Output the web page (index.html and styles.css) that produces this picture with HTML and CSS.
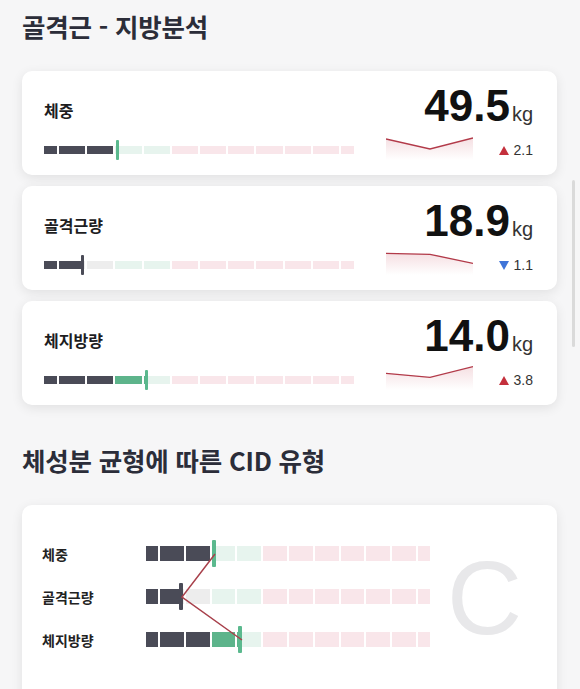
FILE: index.html
```html
<!DOCTYPE html>
<html lang="ko">
<head>
<meta charset="utf-8">
<title>골격근 - 지방분석</title>
<link rel="stylesheet" href="styles.css">
</head>
<body>
<div class="page">
  <h2 class="section-title first">골격근 - 지방분석</h2>

  <div class="card metric">
    <div class="metric-top">
      <span class="metric-label">체중</span>
      <span class="metric-value"><span class="num">49.5</span><span class="unit">kg</span></span>
    </div>
    <div class="metric-bottom">
      <div class="bar">
        <span class="s half d"></span><span class="s d"></span><span class="s d"></span><span class="s n"></span><span class="s n"></span><span class="s o"></span><span class="s o"></span><span class="s o"></span><span class="s o"></span><span class="s o"></span><span class="s o"></span><span class="s half o"></span>
        <i class="marker green" style="left:72px"></i>
      </div>
      <svg class="spark" width="87" height="26" viewBox="0 0 87 26">
        <defs><linearGradient id="sg1" x1="0" y1="0" x2="0" y2="1"><stop offset="0" stop-color="#c0394b" stop-opacity="0.16"/><stop offset="1" stop-color="#c0394b" stop-opacity="0"/></linearGradient></defs>
        <path d="M0,5 L44,15 L87,4 L87,26 L0,26 Z" fill="url(#sg1)"/>
        <path d="M0,5 L44,15 L87,4" fill="none" stroke="#b23a49" stroke-width="1.3"/>
      </svg>
      <span class="delta"><i class="tri up"></i>2.1</span>
    </div>
  </div>

  <div class="card metric">
    <div class="metric-top">
      <span class="metric-label">골격근량</span>
      <span class="metric-value"><span class="num">18.9</span><span class="unit">kg</span></span>
    </div>
    <div class="metric-bottom">
      <div class="bar">
        <span class="s half d"></span><span class="s" style="background:linear-gradient(90deg,#4a4b57 84%,#ededed 84%)"></span><span class="s u"></span><span class="s n"></span><span class="s n"></span><span class="s o"></span><span class="s o"></span><span class="s o"></span><span class="s o"></span><span class="s o"></span><span class="s o"></span><span class="s half o"></span>
        <i class="marker dark" style="left:37px"></i>
      </div>
      <svg class="spark" width="87" height="26" viewBox="0 0 87 26">
        <defs><linearGradient id="sg2" x1="0" y1="0" x2="0" y2="1"><stop offset="0" stop-color="#c0394b" stop-opacity="0.16"/><stop offset="1" stop-color="#c0394b" stop-opacity="0"/></linearGradient></defs>
        <path d="M0,4.3 L44,5.3 L87,14.3 L87,26 L0,26 Z" fill="url(#sg2)"/>
        <path d="M0,4.3 L44,5.3 L87,14.3" fill="none" stroke="#b23a49" stroke-width="1.3"/>
      </svg>
      <span class="delta"><i class="tri down"></i>1.1</span>
    </div>
  </div>

  <div class="card metric">
    <div class="metric-top">
      <span class="metric-label">체지방량</span>
      <span class="metric-value"><span class="num">14.0</span><span class="unit">kg</span></span>
    </div>
    <div class="metric-bottom">
      <div class="bar">
        <span class="s half d"></span><span class="s d"></span><span class="s d"></span><span class="s g"></span><span class="s" style="background:linear-gradient(90deg,#5db48b 7%,#e7f4ee 7%)"></span><span class="s o"></span><span class="s o"></span><span class="s o"></span><span class="s o"></span><span class="s o"></span><span class="s o"></span><span class="s half o"></span>
        <i class="marker green" style="left:101px"></i>
      </div>
      <svg class="spark" width="87" height="26" viewBox="0 0 87 26">
        <defs><linearGradient id="sg3" x1="0" y1="0" x2="0" y2="1"><stop offset="0" stop-color="#c0394b" stop-opacity="0.16"/><stop offset="1" stop-color="#c0394b" stop-opacity="0"/></linearGradient></defs>
        <path d="M0,9.3 L44,13.3 L87,2.7 L87,26 L0,26 Z" fill="url(#sg3)"/>
        <path d="M0,9.3 L44,13.3 L87,2.7" fill="none" stroke="#b23a49" stroke-width="1.3"/>
      </svg>
      <span class="delta"><i class="tri up"></i>3.8</span>
    </div>
  </div>

  <h2 class="section-title second">체성분 균형에 따른 CID 유형</h2>

  <div class="card cid">
    <div class="cid-chart">
      <div class="cid-row">
        <span class="cid-label">체중</span>
        <div class="bar bar-lg">
          <span class="s half d"></span><span class="s d"></span><span class="s d"></span><span class="s n"></span><span class="s n"></span><span class="s o"></span><span class="s o"></span><span class="s o"></span><span class="s o"></span><span class="s o"></span><span class="s o"></span><span class="s half o"></span>
          <i class="marker green" style="left:66px"></i>
        </div>
      </div>
      <div class="cid-row">
        <span class="cid-label">골격근량</span>
        <div class="bar bar-lg">
          <span class="s half d"></span><span class="s" style="background:linear-gradient(90deg,#4a4b57 88%,#ededed 88%)"></span><span class="s u"></span><span class="s n"></span><span class="s n"></span><span class="s o"></span><span class="s o"></span><span class="s o"></span><span class="s o"></span><span class="s o"></span><span class="s o"></span><span class="s half o"></span>
          <i class="marker dark" style="left:33px"></i>
        </div>
      </div>
      <div class="cid-row">
        <span class="cid-label">체지방량</span>
        <div class="bar bar-lg">
          <span class="s half d"></span><span class="s d"></span><span class="s d"></span><span class="s g"></span><span class="s" style="background:linear-gradient(90deg,#5db48b 4%,#e7f4ee 4%)"></span><span class="s o"></span><span class="s o"></span><span class="s o"></span><span class="s o"></span><span class="s o"></span><span class="s o"></span><span class="s half o"></span>
          <i class="marker green" style="left:92px"></i>
        </div>
      </div>
      <svg class="cid-lines" width="408" height="113" viewBox="0 0 408 113">
        <path d="M173,14 L140,57 L200,100" fill="none" stroke="#a8404b" stroke-width="1.5"/>
      </svg>
    </div>
    <div class="cid-type">C</div>
  </div>
</div>
<div class="scroll-thumb"></div>
</body>
</html>
```

FILE: styles.css
```css
* { box-sizing: border-box; }

html, body {
  margin: 0;
  padding: 0;
  background: #f6f6f7;
}

body {
  font-family: "Noto Sans CJK KR", "Noto Sans", sans-serif;
  color: #222;
}

.page {
  padding: 9px 23px 40px 22px;
}

.section-title {
  margin: 0;
  font-size: 25.5px;
  line-height: 34px;
  font-weight: 700;
  color: #2b2d39;
  letter-spacing: -0.2px;
}

.section-title.first { margin-bottom: 28px; }
.section-title.second { margin-top: 38px; margin-bottom: 28px; }

.card {
  background: #fff;
  border-radius: 10px;
  box-shadow: 0 3px 12px rgba(0, 0, 0, 0.09);
}

.metric {
  padding: 17px 24px 15px 22px;
  margin-bottom: 11px;
}

.metric-top {
  display: flex;
  align-items: center;
  justify-content: space-between;
  height: 44px;
}

.metric-label {
  font-size: 16px;
  font-weight: 700;
  color: #1d1d1f;
}

.metric-value {
  display: flex;
  align-items: baseline;
  line-height: 44px;
  font-family: "Liberation Sans", Arial, sans-serif;
}

.num {
  font-size: 44px;
  font-weight: 700;
  color: #111;
}

.unit {
  font-size: 20px;
  color: #333;
  margin-left: 2px;
}

.metric-bottom {
  display: flex;
  align-items: center;
  height: 20px;
  margin-top: 8px;
}

.bar {
  position: relative;
  display: flex;
  gap: 2px;
  width: 310px;
  height: 8px;
  flex: none;
}

.bar .s {
  flex: 1 1 0;
  height: 100%;
}

.bar .s.half { flex: 0.5 1 0; }

.s.d { background: #4a4b57; }
.s.g { background: #5db48b; }
.s.u { background: #ededed; }
.s.n { background: #e7f4ee; }
.s.o { background: #f9e6ea; }

.marker {
  position: absolute;
  top: -6px;
  width: 3px;
  height: 20px;
  border-radius: 1px;
}

.marker.green { background: #5bb98e; }
.marker.dark { background: #4a4b57; }

.spark {
  flex: none;
  align-self: flex-start;
  margin-top: -6px;
  margin-left: 32px;
  display: block;
}

.delta {
  margin-left: auto;
  display: flex;
  align-items: center;
  gap: 5px;
  font-family: "Liberation Sans", Arial, sans-serif;
  font-size: 14px;
  color: #333;
}

.tri {
  width: 0;
  height: 0;
  border-left: 5px solid transparent;
  border-right: 5px solid transparent;
}

.tri.up { border-bottom: 9px solid #c4303c; }
.tri.down { border-top: 9px solid #3f74d8; }

.cid {
  display: flex;
  align-items: flex-start;
  padding: 35px 20px 60px 20px;
}

.cid-chart {
  position: relative;
  display: flex;
  flex-direction: column;
  gap: 16px;
  width: 408px;
}

.cid-row {
  display: flex;
  align-items: center;
  height: 27px;
}

.cid-label {
  width: 104px;
  font-size: 14px;
  font-weight: 700;
  color: #222;
}

.bar.bar-lg {
  width: 284px;
  height: 15px;
}

.bar-lg .marker {
  top: -6px;
  height: 27px;
  width: 3.5px;
}

.cid-lines {
  position: absolute;
  left: 0;
  top: 0;
  pointer-events: none;
}

.cid-type {
  margin-left: -3px;
  margin-top: 5px;
  font-family: "Liberation Sans", Arial, sans-serif;
  font-size: 104px;
  line-height: 107px;
  font-weight: 400;
  color: #e8e8ea;
}

.scroll-thumb {
  position: fixed;
  right: 5px;
  top: 180px;
  width: 3px;
  height: 167px;
  border-radius: 2px;
  background: #dadada;
}
```
